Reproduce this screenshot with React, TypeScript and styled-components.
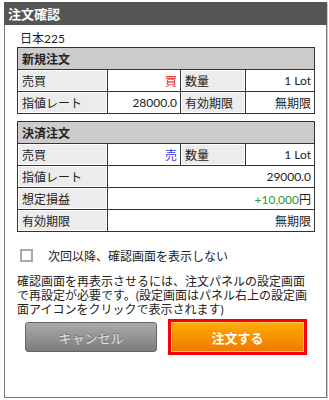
import React from "react";
import styled, { createGlobalStyle } from "styled-components";

const Global = createGlobalStyle`
  html, body { margin: 0; padding: 0; background: #fff; }
  body { font-family: Lato, "Noto Sans CJK JP", sans-serif; color: #222; }
`;

const Panel = styled.div`
  margin: 2px 0 0 4px;
  width: 323px;
  height: 396px;
  box-sizing: border-box;
  border: 1px solid #777;
  border-top: none;
  box-shadow: 1px 1px 0 #ccc;
  display: flex;
  flex-direction: column;
`;

const TitleBar = styled.div`
  height: 23px;
  margin: 0 -1px;
  background: #555;
  color: #fff;
  font-weight: bold;
  font-size: 13px;
  line-height: 23px;
  padding-left: 4px;
  font-family: "Noto Sans CJK JP", sans-serif;
`;

const Body = styled.div`
  padding: 5px 12px 0 12px;
  display: flex;
  flex-direction: column;
`;

const Symbol = styled.div`
  font-size: 12px;
  line-height: 17px;
  padding-left: 3px;
`;

const Table = styled.table`
  border-collapse: collapse;
  width: 297px;
  table-layout: fixed;
  font-size: 12px;
  margin-bottom: 7px;
`;

const HeadCell = styled.th`
  background: #ccc;
  border: 1px solid #333;
  height: 21px;
  padding: 0 4px;
  text-align: left;
  font-weight: bold;
  font-size: 12px;
`;

const Label = styled.td`
  background: #ececec;
  border: 1px solid #333;
  box-shadow: inset 0 0 0 1px #fff;
  height: 21px;
  padding: 0 4px;
  white-space: nowrap;
`;

const Value = styled.td<{ $color?: string }>`
  background: #fff;
  border: 1px solid #333;
  height: 21px;
  padding: 0 3px;
  text-align: right;
  white-space: nowrap;
  color: ${(p) => p.$color || "#222"};
`;

const Profit = styled.span`
  color: #2a9a2a;
`;

const CheckRow = styled.label`
  display: flex;
  align-items: center;
  gap: 15px;
  font-size: 12px;
  margin: 6px 0 0 3px;
  height: 20px;
`;

const Box = styled.span`
  width: 9px;
  height: 9px;
  border: 2px solid #aaa;
  background: #fff;
`;

const Note = styled.p`
  font-size: 12px;
  line-height: 14px;
  margin: 10px 0 0 0;
  color: #222;
`;

const Buttons = styled.div`
  display: flex;
  align-items: center;
  gap: 11px;
  margin: 2px 0 0 8px;
`;

const CancelButton = styled.button`
  width: 132px;
  height: 30px;
  border: 1px solid #666;
  border-radius: 3px;
  background: linear-gradient(#ababab, #7c7c7c);
  color: #e4e4e4;
  text-shadow: 0 -1px 0 #666;
  font-size: 13px;
  font-family: "Noto Sans CJK JP", sans-serif;
`;

const OrderButton = styled.button`
  width: 139px;
  height: 36px;
  border: 3px solid #f00;
  background: linear-gradient(#ffad00, #f07800);
  color: #fff;
  font-weight: bold;
  font-size: 13px;
  font-family: "Noto Sans CJK JP", sans-serif;
  box-shadow: inset 0 0 0 1px #ffc860;
`;

const Cols = () => (
  <colgroup>
    <col style={{ width: 90 }} />
    <col style={{ width: 73 }} />
    <col style={{ width: 65 }} />
    <col style={{ width: 69 }} />
  </colgroup>
);

export default function App() {
  return (
    <>
      <Global />
      <Panel>
        <TitleBar>注文確認</TitleBar>
        <Body>
          <Symbol>日本225</Symbol>
          <Table>
            <Cols />
            <thead>
              <tr>
                <HeadCell colSpan={4}>新規注文</HeadCell>
              </tr>
            </thead>
            <tbody>
              <tr>
                <Label>売買</Label>
                <Value $color="#e02020">買</Value>
                <Label>数量</Label>
                <Value>1 Lot</Value>
              </tr>
              <tr>
                <Label>指値レート</Label>
                <Value>28000.0</Value>
                <Label>有効期限</Label>
                <Value>無期限</Value>
              </tr>
            </tbody>
          </Table>
          <Table>
            <Cols />
            <thead>
              <tr>
                <HeadCell colSpan={4}>決済注文</HeadCell>
              </tr>
            </thead>
            <tbody>
              <tr>
                <Label>売買</Label>
                <Value $color="#3333ee">売</Value>
                <Label>数量</Label>
                <Value>1 Lot</Value>
              </tr>
              <tr>
                <Label>指値レート</Label>
                <Value colSpan={3}>29000.0</Value>
              </tr>
              <tr>
                <Label>想定損益</Label>
                <Value colSpan={3}>
                  <Profit>+10,000</Profit>円
                </Value>
              </tr>
              <tr>
                <Label>有効期限</Label>
                <Value colSpan={3}>無期限</Value>
              </tr>
            </tbody>
          </Table>
          <CheckRow>
            <Box />
            次回以降、確認画面を表示しない
          </CheckRow>
          <Note>
            確認画面を再表示させるには、注文パネルの設定画面で再設定が必要です。(設定画面はパネル右上の設定画面アイコンをクリックで表示されます)
          </Note>
          <Buttons>
            <CancelButton>キャンセル</CancelButton>
            <OrderButton>注文する</OrderButton>
          </Buttons>
        </Body>
      </Panel>
    </>
  );
}
